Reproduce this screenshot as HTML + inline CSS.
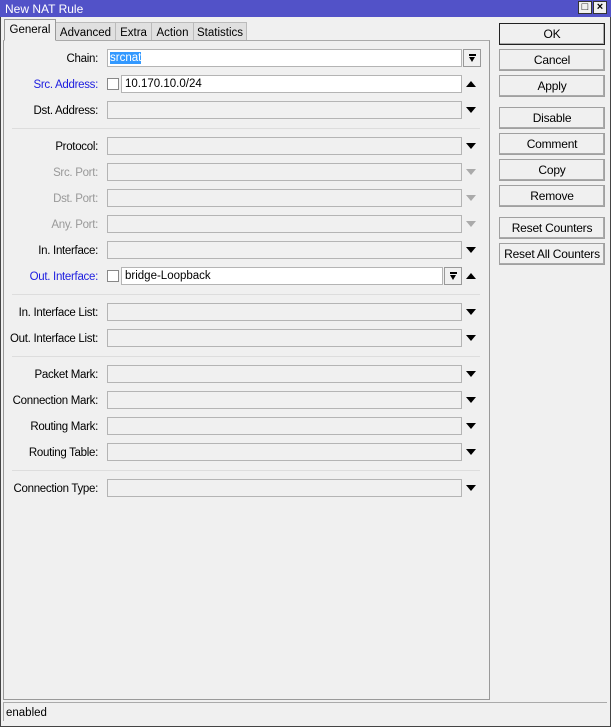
<!DOCTYPE html>
<html><head><style>
*{box-sizing:border-box;margin:0;padding:0}
body{width:611px;height:727px;background:#f0f0f0;font-family:"Liberation Sans",sans-serif;font-size:11px;position:relative;overflow:hidden;color:#000}
.frame{position:absolute;left:0;top:0;width:611px;height:727px;border:1px solid #444;border-top:none}
.title{position:absolute;left:0;top:0;width:611px;height:17px;background:#5252c8;color:#fff;font-size:12px;padding:2px 0 0 5px}
.wb{position:absolute;top:1px;width:14px;height:13px;background:#f0f0f0;border:1px solid #333;color:#000;font-size:11px;line-height:11px;text-align:center;font-weight:bold}
.tab{position:absolute;top:22px;height:19px;background:#e0e0e0;border:1px solid #bbb;border-bottom:none;padding:4px 0 0;text-align:center;font-size:11.5px}
.tab.act{background:#f0f0f0;top:19px;height:22px;border-color:#999}
.panel{position:absolute;left:3px;top:40px;width:487px;height:660px;border:1px solid #999;border-top:1px solid #aaa}
.lbl{position:absolute;right:513px;text-align:right;white-space:nowrap;font-size:11.5px;letter-spacing:-0.3px}
.blue{color:#2020e0}.gray{color:#999}
.fld{position:absolute;left:107px;width:355px;height:18px;background:#f0f0f0;border:1px solid #b4b4b4}
.fld.w{background:#fff;font-size:11.5px}
.dn,.up{position:absolute;left:466px;width:0;height:0;border-left:5px solid transparent;border-right:5px solid transparent}
.dn{border-top:6px solid #000}.up{border-bottom:6px solid #000}
.dn.g{border-top-color:#aaa}
.sep{position:absolute;left:12px;width:468px;height:1px;background:#ddd}
.cb{position:absolute;left:107px;width:12px;height:12px;background:#fff;border:1px solid #888}
.btn{position:absolute;left:499px;width:106px;height:22px;border:1px solid #999;border-top-color:#fff;border-left-color:#fff;box-shadow:inset -1px -1px 0 #aaa, 0 0 0 0 #000;outline:1px solid #a0a0a0;outline-offset:-1px;background:#f0f0f0;text-align:center;line-height:21px;font-size:12px;letter-spacing:-0.2px}
.status{position:absolute;left:3px;top:702px;width:604px;height:19px;border-top:1px solid #aaa;border-left:1px solid #aaa;padding:4px 0 0 2px;font-size:11.5px}
.cbtn{position:absolute;width:18px;height:18px;border:1px solid #999;background:#f0f0f0}
.cbtn i{position:absolute;left:5px;top:4px;width:7px;height:2px;background:#000}
.cbtn b{position:absolute;left:5px;top:7px;width:0;height:0;border-left:3.5px solid transparent;border-right:3.5px solid transparent;border-top:5px solid #000}
</style></head><body>
<div class="frame"></div>
<div class="title">New NAT Rule</div>
<div class="wb" style="left:578px">□</div>
<div class="wb" style="left:593px">×</div>
<div class="tab" style="left:55px;width:61px">Advanced</div>
<div class="tab" style="left:115px;width:37px">Extra</div>
<div class="tab" style="left:151px;width:43px">Action</div>
<div class="tab" style="left:193px;width:54px">Statistics</div>
<div class="panel"></div>
<div class="tab act" style="left:4px;width:52px;border-bottom:1px solid #f0f0f0;height:22px;padding-top:4px">General</div>

<div class="lbl" style="top:53px">Chain:</div>
<div class="fld w" style="top:49px;width:355px;padding:2px 2px"><span style="background:#3399ff;color:#fff">srcnat</span></div>
<div class="cbtn" style="left:463px;top:49px"><i></i><b></b></div>

<div class="lbl blue" style="top:79px">Src. Address:</div>
<div class="cb" style="top:78px"></div>
<div class="fld w" style="top:75px;left:121px;width:341px;padding:2px 3px">10.170.10.0/24</div>
<div class="up" style="top:81px"></div>

<div class="lbl" style="top:105px">Dst. Address:</div>
<div class="fld" style="top:101px"></div><div class="dn" style="top:107px"></div>
<div class="sep" style="top:128px"></div>

<div class="lbl" style="top:141px">Protocol:</div>
<div class="fld" style="top:137px"></div><div class="dn" style="top:143px"></div>
<div class="lbl gray" style="top:167px">Src. Port:</div>
<div class="fld" style="top:163px"></div><div class="dn g" style="top:169px"></div>
<div class="lbl gray" style="top:193px">Dst. Port:</div>
<div class="fld" style="top:189px"></div><div class="dn g" style="top:195px"></div>
<div class="lbl gray" style="top:219px">Any. Port:</div>
<div class="fld" style="top:215px"></div><div class="dn g" style="top:221px"></div>
<div class="lbl" style="top:245px">In. Interface:</div>
<div class="fld" style="top:241px"></div><div class="dn" style="top:247px"></div>
<div class="lbl blue" style="top:271px">Out. Interface:</div>
<div class="cb" style="top:270px"></div>
<div class="fld w" style="top:267px;left:121px;width:322px;padding:2px 3px">bridge-Loopback</div>
<div class="cbtn" style="left:444px;top:267px"><i></i><b></b></div>
<div class="up" style="top:273px"></div>
<div class="sep" style="top:294px"></div>

<div class="lbl" style="top:307px">In. Interface List:</div>
<div class="fld" style="top:303px"></div><div class="dn" style="top:309px"></div>
<div class="lbl" style="top:333px">Out. Interface List:</div>
<div class="fld" style="top:329px"></div><div class="dn" style="top:335px"></div>
<div class="sep" style="top:356px"></div>

<div class="lbl" style="top:369px">Packet Mark:</div>
<div class="fld" style="top:365px"></div><div class="dn" style="top:371px"></div>
<div class="lbl" style="top:395px">Connection Mark:</div>
<div class="fld" style="top:391px"></div><div class="dn" style="top:397px"></div>
<div class="lbl" style="top:421px">Routing Mark:</div>
<div class="fld" style="top:417px"></div><div class="dn" style="top:423px"></div>
<div class="lbl" style="top:447px">Routing Table:</div>
<div class="fld" style="top:443px"></div><div class="dn" style="top:449px"></div>
<div class="sep" style="top:470px"></div>
<div class="lbl" style="top:483px">Connection Type:</div>
<div class="fld" style="top:479px"></div><div class="dn" style="top:485px"></div>

<div class="btn" style="top:23px;outline-color:#222">OK</div>
<div class="btn" style="top:49px">Cancel</div>
<div class="btn" style="top:75px">Apply</div>
<div class="btn" style="top:107px">Disable</div>
<div class="btn" style="top:133px">Comment</div>
<div class="btn" style="top:159px">Copy</div>
<div class="btn" style="top:185px">Remove</div>
<div class="btn" style="top:217px">Reset Counters</div>
<div class="btn" style="top:243px">Reset All Counters</div>

<div class="status">enabled</div>
</body></html>
